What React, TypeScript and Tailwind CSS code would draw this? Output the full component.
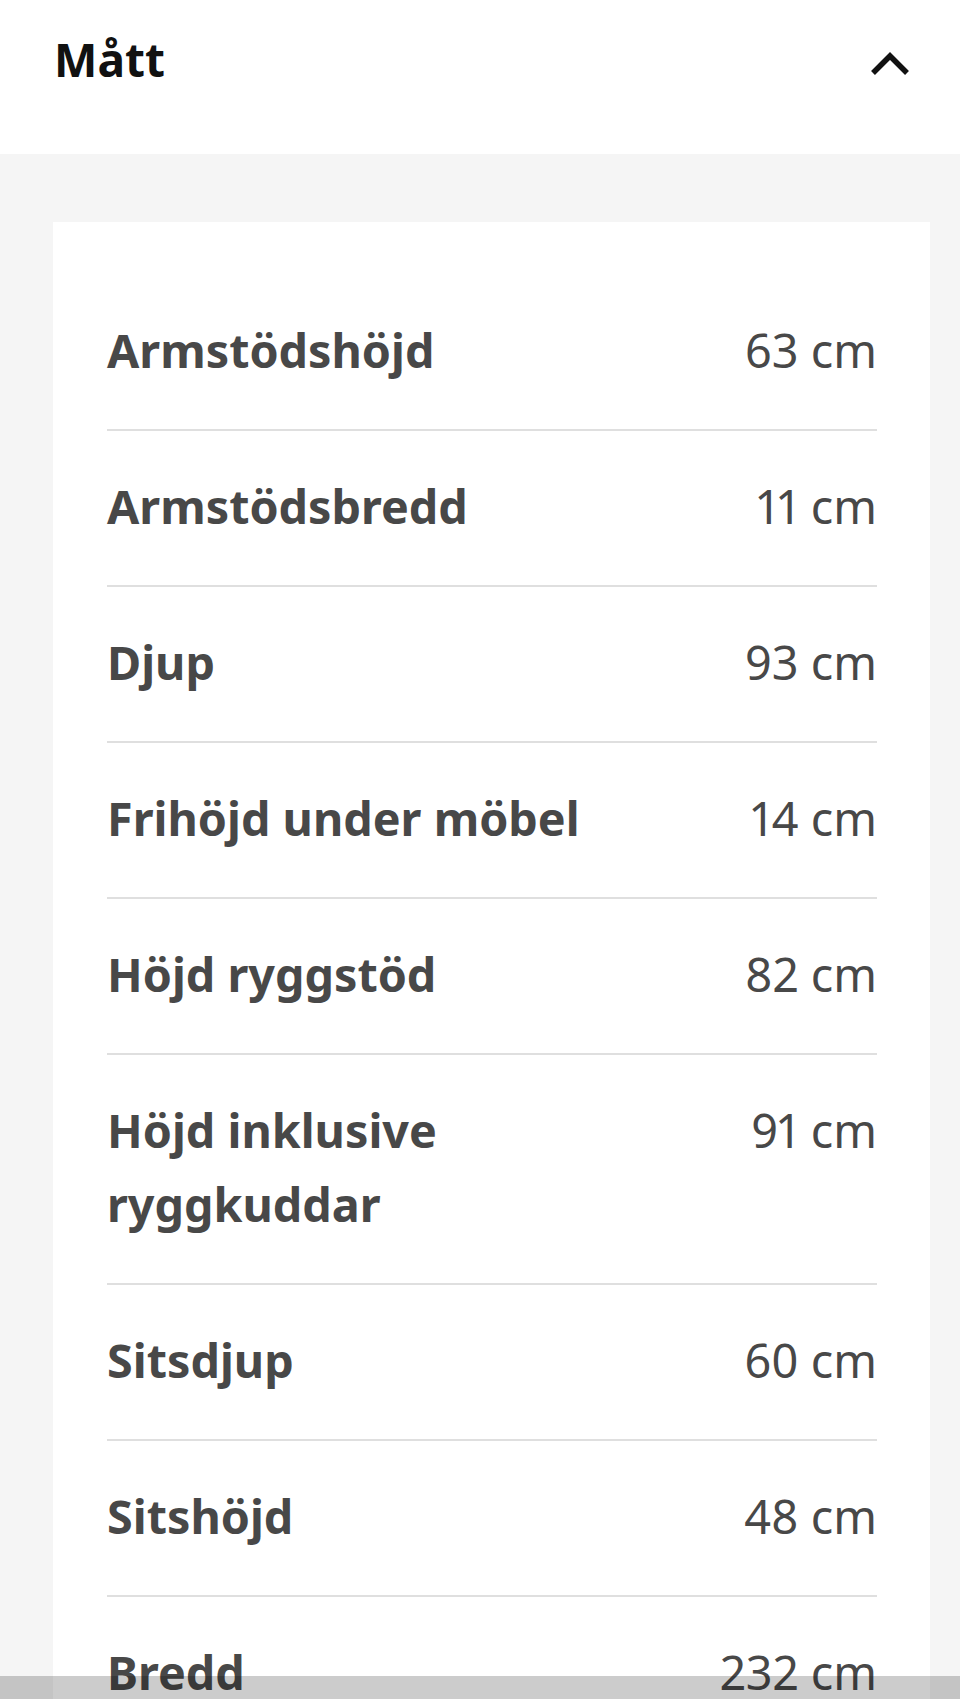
import React from "react";

const rows: { label: string; value: string }[] = [
  { label: "Armstödshöjd", value: "63 cm" },
  { label: "Armstödsbredd", value: "11 cm" },
  { label: "Djup", value: "93 cm" },
  { label: "Frihöjd under möbel", value: "14 cm" },
  { label: "Höjd ryggstöd", value: "82 cm" },
  { label: "Höjd inklusive ryggkuddar", value: "91 cm" },
  { label: "Sitsdjup", value: "60 cm" },
  { label: "Sitshöjd", value: "48 cm" },
  { label: "Bredd", value: "232 cm" },
  { label: "Längd", value: "160 cm" },
];

export default function App() {
  return (
    <div
      className="relative h-[1699px] w-[960px] overflow-hidden bg-[#f5f5f5]"
      style={{ fontFamily: '"Noto Sans", "Open Sans", sans-serif' }}
    >
      <header className="flex h-[154px] items-start justify-between bg-white pl-[54px] pr-[49px] pt-[22px]">
        <h2 className="text-[46px] font-bold leading-[74px] text-[#111111]">Mått</h2>
        <div className="flex h-[74px] items-center pt-[10px]">
          <svg width="41" height="26" viewBox="0 0 41 26" fill="none">
            <polyline
              points="3,22 20,5 37,22"
              stroke="#111111"
              strokeWidth="5.5"
              strokeLinecap="butt"
              strokeLinejoin="miter"
            />
          </svg>
        </div>
      </header>
      <div className="pl-[53px] pr-[30px] pt-[68px]">
        <div className="bg-white pl-[54px] pr-[53px] pt-[53px]">
          {rows.map((r, i) => (
            <div
              key={i}
              className={`flex items-start justify-between gap-[40px] pt-[38px] pb-[42px] ${
                i < rows.length - 1 ? "border-b-2 border-[#dfdfdf]" : ""
              }`}
            >
              <span className="max-w-[540px] text-[46.7px] font-bold leading-[74px] text-[#484848]">
                {r.label}
              </span>
              <span className="shrink-0 whitespace-nowrap text-[46.8px] leading-[74px] text-[#484848] proportional-nums">
                {r.value}
              </span>
            </div>
          ))}
        </div>
      </div>
      <div className="absolute bottom-0 left-0 h-[23px] w-full bg-black/20" />
    </div>
  );
}
